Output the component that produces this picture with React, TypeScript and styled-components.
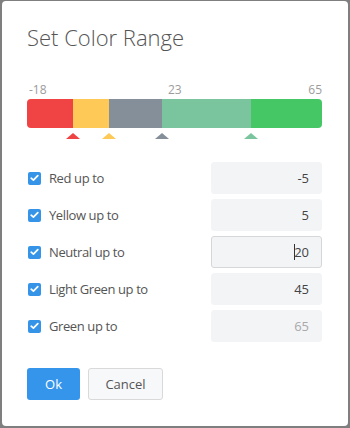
import styled, { createGlobalStyle } from "styled-components";

const GlobalStyle = createGlobalStyle`
  html, body {
    margin: 0;
    padding: 0;
    background: #7f7f7f;
  }
  body {
    font-family: "Open Sans", "Noto Sans", sans-serif;
  }
`;

type Segment = { color: string; width: number };

const segments: Segment[] = [
  { color: "#ef4344", width: 46 },
  { color: "#fec957", width: 36 },
  { color: "#848f99", width: 53 },
  { color: "#7bc59e", width: 89 },
  { color: "#44c764", width: 71 },
];

const total = segments.reduce((s, x) => s + x.width, 0);

const rows = [
  { label: "Red up to", value: "-5" },
  { label: "Yellow up to", value: "5" },
  { label: "Neutral up to", value: "20", focused: true },
  { label: "Light Green up to", value: "45" },
  { label: "Green up to", value: "65", disabled: true },
];

const App = () => {
  let acc = 0;
  const markers = segments.slice(0, 4).map((seg) => {
    acc += seg.width;
    return { color: seg.color, left: acc };
  });

  return (
    <>
      <GlobalStyle />
      <Dialog>
        <Title>Set Color Range</Title>
        <Labels>
          <ScaleLabel style={{ left: 2 }}>-18</ScaleLabel>
          <ScaleLabel style={{ left: 141 }}>23</ScaleLabel>
          <ScaleLabel style={{ right: 0 }}>65</ScaleLabel>
        </Labels>
        <Bar>
          {segments.map((seg, i) => (
            <Piece key={i} $color={seg.color} style={{ flexGrow: seg.width }} />
          ))}
        </Bar>
        <Markers>
          {markers.map((m, i) => (
            <Marker
              key={i}
              $color={m.color}
              style={{ left: `${(m.left / total) * 100}%` }}
            />
          ))}
        </Markers>
        <Rows>
          {rows.map((r) => (
            <Row key={r.label}>
              <Check>
                <svg width="9" height="8" viewBox="0 0 9 8">
                  <path
                    d="M1.2 4.2 L3.4 6.2 L7.8 1.6"
                    fill="none"
                    stroke="#fff"
                    strokeWidth="1.7"
                    strokeLinecap="round"
                    strokeLinejoin="round"
                  />
                </svg>
              </Check>
              <RowLabel>{r.label}</RowLabel>
              <ValueBox $focused={r.focused} $disabled={r.disabled}>
                {r.focused && <Caret />}
                {r.value}
              </ValueBox>
            </Row>
          ))}
        </Rows>
        <Buttons>
          <OkButton>Ok</OkButton>
          <CancelButton>Cancel</CancelButton>
        </Buttons>
      </Dialog>
    </>
  );
};

const Dialog = styled.div`
  box-sizing: border-box;
  width: 346px;
  height: 425px;
  margin: 1px 2px 2px 2px;
  background: #fff;
  border-radius: 4px;
  padding: 21px 26px 0 25px;
`;

const Title = styled.h1`
  margin: 0;
  font-size: 22px;
  line-height: 30px;
  font-weight: 300;
  color: #555;
`;

const Labels = styled.div`
  position: relative;
  margin-top: 30px;
  height: 16px;
`;

const ScaleLabel = styled.span`
  position: absolute;
  top: 0;
  font-size: 12px;
  line-height: 16px;
  color: #9c9c9c;
`;

const Bar = styled.div`
  display: flex;
  height: 29px;
  margin-top: 1px;
  border-radius: 4px;
  overflow: hidden;
`;

const Piece = styled.div<{ $color: string }>`
  flex-basis: 0;
  background: ${(p) => p.$color};
`;

const Markers = styled.div`
  position: relative;
  height: 6px;
  margin-top: 5px;
`;

const Marker = styled.div<{ $color: string }>`
  position: absolute;
  top: 0;
  width: 0;
  height: 0;
  margin-left: -7px;
  border-left: 7px solid transparent;
  border-right: 7px solid transparent;
  border-bottom: 6px solid ${(p) => p.$color};
`;

const Rows = styled.div`
  display: flex;
  flex-direction: column;
  gap: 5px;
  margin-top: 23px;
`;

const Row = styled.div`
  display: flex;
  align-items: center;
  height: 32px;
`;

const Check = styled.span`
  display: flex;
  align-items: center;
  justify-content: center;
  width: 13px;
  height: 13px;
  margin-left: 1px;
  border-radius: 2px;
  background: #3594e8;
`;

const RowLabel = styled.span`
  margin-left: 8px;
  font-size: 13px;
  letter-spacing: -0.4px;
  color: #555;
`;

const ValueBox = styled.div<{ $focused?: boolean; $disabled?: boolean }>`
  box-sizing: border-box;
  margin-left: auto;
  width: 111px;
  height: 32px;
  display: flex;
  align-items: center;
  justify-content: flex-end;
  padding-right: 12px;
  border-radius: 3px;
  background: #f3f4f6;
  border: 1px solid ${(p) => (p.$focused ? "#d6d7d9" : "#f3f4f6")};
  font-size: 13px;
  color: ${(p) => (p.$disabled ? "#a9a9a9" : "#444")};
`;

const Caret = styled.span`
  width: 1px;
  height: 16px;
  margin-right: -1px;
  background: #333;
`;

const Buttons = styled.div`
  display: flex;
  gap: 8px;
  margin-top: 26px;
`;

const OkButton = styled.button`
  width: 53px;
  height: 32px;
  border: none;
  border-radius: 3px;
  background: #3595eb;
  color: #fff;
  font-family: inherit;
  font-size: 13px;
`;

const CancelButton = styled.button`
  width: 75px;
  height: 32px;
  border: 1px solid #d9d9d9;
  border-radius: 3px;
  background: #f7f8fa;
  color: #555;
  font-family: inherit;
  font-size: 13px;
`;

export default App;
